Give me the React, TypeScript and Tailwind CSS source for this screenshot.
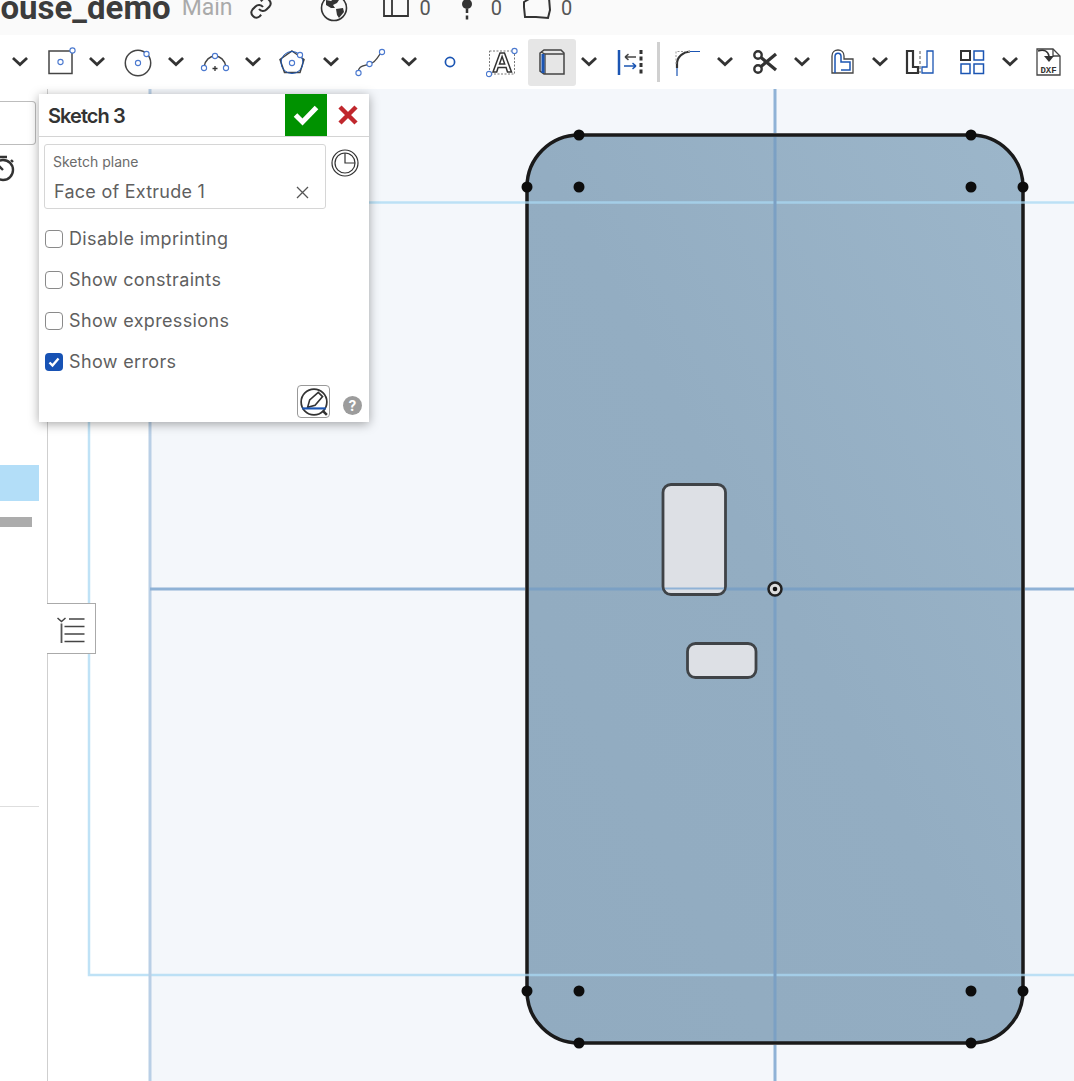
import React from "react";

const Chevron = () => (
  <svg width="16" height="10" viewBox="0 0 16 10" fill="none" stroke="#333" strokeWidth="2.800" strokeLinecap="square">
    <path d="M2 2 8 7.500 14 2" />
  </svg>
);

const BLUE = "#1b55b3";
const Handle = ({ cx, cy, r = 2.6 }: { cx: number; cy: number; r?: number }) => (
  <circle cx={cx} cy={cy} r={r} fill="#fff" stroke="#4b79cf" strokeWidth="1.1" />
);

const Ic = ({ children }: { children: React.ReactNode }) => (
  <svg width="32" height="32" viewBox="0 0 32 32" fill="none">{children}</svg>
);

const RectIcon = () => (
  <Ic>
    <rect x="4" y="5" width="23" height="22.5" stroke="#444" strokeWidth="1.5" />
    <Handle cx={15.5} cy={16} />
    <Handle cx={27.5} cy={4.5} />
  </Ic>
);
const CircleIcon = () => (
  <Ic>
    <circle cx="16" cy="17" r="12.7" stroke="#444" strokeWidth="1.5" />
    <Handle cx={16} cy={17} />
    <Handle cx={24.5} cy={8} />
  </Ic>
);
const ArcIcon = () => (
  <Ic>
    <path d="M5 21C6 14 11 10 16 10s10 4 11 11" stroke="#444" strokeWidth="1.4" />
    <path d="M16 20v5M13.5 22.5h5" stroke="#333" strokeWidth="1.3" />
    <Handle cx={16} cy={10} />
    <Handle cx={5} cy={22} />
    <Handle cx={27} cy={22} />
  </Ic>
);
const PentagonIcon = () => (
  <Ic>
    <path d="M16 5 28 13.5 24 26.5H8.5L4 13.5Z" stroke="#444" strokeWidth="1.5" />
    <circle cx="16" cy="16.5" r="11" stroke={BLUE} strokeWidth="1" />
    <Handle cx={16} cy={17} />
    <Handle cx={24} cy={9} />
  </Ic>
);
const SplineIcon = () => (
  <Ic>
    <path d="M4 27C4 20 9 20 14 18.5S21 16 26 8" stroke="#444" strokeWidth="1.4" />
    <Handle cx={4.5} cy={27} />
    <Handle cx={15.5} cy={18} />
    <Handle cx={28} cy={6} />
  </Ic>
);
const PointIcon = () => (
  <Ic><circle cx="16" cy="16" r="4.6" stroke={BLUE} strokeWidth="1.7" /></Ic>
);
const TextIcon = () => (
  <Ic>
    <rect x="3.5" y="5" width="25" height="23" stroke="#777" strokeWidth="1" strokeDasharray="2 1.5" />
    <path d="M7 26 14 7h4.500l7 19h-4l-1.400-4.500h-8L10.700 26ZM13.500 18h5.200l-2.600-7.500Z" stroke="#333" strokeWidth="1.500" fill="#fff" />
    <Handle cx={28.5} cy={5} />
    <Handle cx={3} cy={28} />
  </Ic>
);
const ConstructionIcon = () => (
  <Ic>
    <path d="M4 7 8 4H25L28 7V28H8L4 25Z" stroke="#444" strokeWidth="1.500" />
    <path d="M5 6 9 8H28M9 8V28" stroke="#444" strokeWidth="1.300" />
    <path d="M7 8V27" stroke={BLUE} strokeWidth="3" />
  </Ic>
);
const DimensionIcon = () => (
  <Ic>
    <path d="M5 4v25" stroke={BLUE} strokeWidth="2.500" />
    <path d="M11 11h11M11 11l3.500-2.800M11 11l3.500 2.800" stroke="#444" strokeWidth="1.500" />
    <path d="M10 20h12M22 20l-3.500-2.800M22 20l-3.500 2.800" stroke={BLUE} strokeWidth="1.500" />
    <path d="M27 4v25" stroke="#333" strokeWidth="3" strokeDasharray="4 2.500" />
  </Ic>
);
const FilletIcon = () => (
  <Ic>
    <path d="M5 22V18C5 11 11 6 18 5.500" stroke="#333" strokeWidth="2.200" />
    <path d="M5 22v8M18 5.500h10" stroke={BLUE} strokeWidth="1.200" />
    <path d="M4 18V5.500h14" stroke="#999" strokeWidth="1" strokeDasharray="2 1.500" />
  </Ic>
);
const ScissorsIcon = () => (
  <Ic>
    <circle cx="9" cy="9" r="3.700" stroke="#333" strokeWidth="2.400" />
    <circle cx="9" cy="23" r="3.700" stroke="#333" strokeWidth="2.400" />
    <path d="M12 11.500 27 24M12 20.500 27 8" stroke="#333" strokeWidth="3.200" />
  </Ic>
);
const UseIcon = () => (
  <Ic>
    <path d="M6 27V10c0-8 12-8 12 0v3h9v14Z" stroke="#444" strokeWidth="1.300" />
    <path d="M9 27V10.500c0-4.500 6-4.500 6 0V16h9v8h-9" stroke={BLUE} strokeWidth="1.500" />
  </Ic>
);
const MirrorIcon = () => (
  <Ic>
    <path d="M3 5h6v16h5v6H3Z" stroke="#333" strokeWidth="2.200" />
    <path d="M29 5h-6v16h-5v6h11Z" stroke={BLUE} strokeWidth="1.300" />
    <path d="M16 5v22" stroke="#555" strokeWidth="1" strokeDasharray="3 2" />
  </Ic>
);
const PatternIcon = () => (
  <Ic>
    <rect x="5" y="5" width="9" height="9" stroke="#333" strokeWidth="2" />
    <rect x="18" y="5" width="9.500" height="9" stroke={BLUE} strokeWidth="1.500" />
    <rect x="5" y="18" width="9" height="9.500" stroke={BLUE} strokeWidth="1.500" />
    <rect x="18" y="18" width="9.500" height="9.500" stroke={BLUE} strokeWidth="1.500" />
  </Ic>
);
const DxfIcon = () => (
  <svg width="32" height="32" viewBox="0 0 32 32" fill="none">
    <path d="M5 29V3h16l7 7v19Z" stroke="#444" strokeWidth="1.300" fill="#fff" />
    <path d="M21 3v7h7" stroke="#444" strokeWidth="1.300" />
    <path d="M6 5c6-2 10 0 11 5" stroke="#333" strokeWidth="1.600" />
    <path d="M12 10h10l-5 6Z" fill="#333" />
    <text x="16.500" y="27" textAnchor="middle" fontFamily="Liberation Mono, monospace" fontSize="9" fontWeight="700" fill="#333">DXF</text>
  </svg>
);

const tools: { w: number; node: React.ReactNode; active?: boolean }[] = [
  { w: 40, node: <Chevron /> },
  { w: 42, node: <RectIcon /> },
  { w: 30, node: <Chevron /> },
  { w: 51, node: <CircleIcon /> },
  { w: 25, node: <Chevron /> },
  { w: 53, node: <ArcIcon /> },
  { w: 24, node: <Chevron /> },
  { w: 54, node: <PentagonIcon /> },
  { w: 24, node: <Chevron /> },
  { w: 54, node: <SplineIcon /> },
  { w: 24, node: <Chevron /> },
  { w: 58, node: <PointIcon /> },
  { w: 45, node: <TextIcon /> },
  { w: 4, node: null },
  { w: 48, node: <ConstructionIcon />, active: true },
  { w: 26, node: <Chevron /> },
  { w: 55, node: <DimensionIcon /> },
];
const tools2: { w: number; node: React.ReactNode }[] = [
  { w: 36, node: <FilletIcon /> },
  { w: 38, node: <Chevron /> },
  { w: 42, node: <ScissorsIcon /> },
  { w: 32, node: <Chevron /> },
  { w: 48, node: <UseIcon /> },
  { w: 28, node: <Chevron /> },
  { w: 52, node: <MirrorIcon /> },
  { w: 52, node: <PatternIcon /> },
  { w: 24, node: <Chevron /> },
  { w: 52, node: <DxfIcon /> },
];

const Check = ({ label, checked }: { label: string; checked?: boolean }) => (
  <div className="flex h-[41px] items-center gap-[6px] pl-[6px]">
    {checked ? (
      <span className="flex h-[18px] w-[18px] items-center justify-center rounded-[4px] bg-[#1752b4]">
        <svg width="12" height="12" viewBox="0 0 12 12" fill="none" stroke="#fff" strokeWidth="2.400">
          <path d="M1.500 6.500 4.500 9.500 10.500 2.500" />
        </svg>
      </span>
    ) : (
      <span className="h-[18px] w-[18px] rounded-[4px] border border-[#8a8a8a] bg-white" />
    )}
    <span className="text-[18px] leading-[22px] tracking-[0.35px] text-[#5f5f5f]">{label}</span>
  </div>
);

const pts = [
  [579, 135], [971, 135], [527, 187], [1023, 187], [579, 187], [971, 187],
  [527, 991], [1023, 991], [579, 991], [971, 991], [579, 1043], [971, 1043],
];

export default function App() {
  return (
    <div className="relative flex h-[1081px] w-[1074px] flex-col overflow-hidden bg-white font-['Inter','Liberation_Sans',sans-serif]">
      {/* title bar */}
      <div className="flex h-[35px] shrink-0 items-center overflow-hidden bg-[#fafafa]">
        <div className="-ml-[18px] -mt-[20px] flex items-center text-[#3c3c3c]">
          <span className="font-['Roboto',sans-serif] text-[33px] font-bold leading-[36px]">house_demo</span>
          <span className="ml-[11px] font-['Roboto',sans-serif] text-[23px] leading-[36px] text-[#aaa]">Main</span>
          <svg className="ml-[16px]" width="24" height="24" viewBox="0 0 24 24" fill="none" stroke="#333" strokeWidth="2">
            <path d="M10 13a5 5 0 0 0 7.500.5l3-3a5 5 0 0 0-7-7l-1.700 1.700" />
            <path d="M14 11a5 5 0 0 0-7.500-.5l-3 3a5 5 0 0 0 7 7l1.700-1.700" />
          </svg>
          <svg className="ml-[47px]" width="28" height="28" viewBox="0 0 28 28" fill="none">
            <circle cx="14" cy="14" r="12.500" stroke="#333" strokeWidth="1.600" />
            <path d="M6 6l5 1 5-4 3 3-2 3-4 2 2 3-4 0-5-3ZM16 15l7-1 1 4-5 6-2-3Z" fill="#333" />
          </svg>
          <svg className="-mt-[4px] ml-[34px]" width="28" height="28" viewBox="0 0 28 28" fill="none" stroke="#333" strokeWidth="1.800">
            <path d="M9 6V1h11l6 6v17H10V6H2v18h8M20 1v6h6" />
          </svg>
          <span className="ml-[10px] font-['Roboto',sans-serif] text-[20px] text-[#555]">0</span>
          <svg className="ml-[26px]" width="20" height="28" viewBox="0 0 20 28" fill="none">
            <circle cx="10" cy="10" r="5" fill="#333" />
            <path d="M10 15v11" stroke="#333" strokeWidth="2.500" strokeDasharray="4 2.500" />
          </svg>
          <span className="ml-[14px] font-['Roboto',sans-serif] text-[20px] text-[#555]">0</span>
          <svg className="ml-[20px]" width="30" height="28" viewBox="0 0 30 28" fill="none" stroke="#333" strokeWidth="2">
            <path d="M2 8l10-6 3 3 12-1 1 12-2 8-12-1-11 0-1-10Z" />
          </svg>
          <span className="ml-[9px] font-['Roboto',sans-serif] text-[20px] text-[#555]">0</span>
        </div>
      </div>

      {/* toolbar */}
      <div className="flex h-[54px] shrink-0 items-center bg-white">
        {tools.map((t, i) => (
          <div key={i} style={{ width: t.w }} className={`flex h-[47px] shrink-0 items-center justify-center ${t.active ? "rounded-[3px] bg-[#e6e6e6]" : ""}`}>
            {t.node}
          </div>
        ))}
        <div className="h-[40px] w-[3px] shrink-0 bg-[#d0d0d0]" />
        <div className="w-[10px] shrink-0" />
        {tools2.map((t, i) => (
          <div key={i} style={{ width: t.w }} className="flex h-[47px] shrink-0 items-center justify-center">
            {t.node}
          </div>
        ))}
      </div>

      {/* body */}
      <div className="flex min-h-0 flex-1">
        <aside className="flex w-[48px] shrink-0 flex-col border-r border-[#cfcfcf] bg-white">
          <div className="mt-[12px] h-[44px] w-[36px] rounded-r-[4px] border border-l-0 border-[#bdbdbd]" />
          <div className="mt-[9px] h-[30px] overflow-hidden">
            <svg className="-ml-[10px]" width="28" height="30" viewBox="0 0 28 30" fill="none" stroke="#333" strokeWidth="2.400">
              <circle cx="13" cy="16" r="10" />
              <path d="M13 16 6 9M9 3h8M21 6l2 2" />
            </svg>
          </div>
          <div className="mt-[281px] h-[36px] w-[39px] bg-[#b3def8]" />
          <div className="mt-[16px] h-[10px] w-[32px] bg-[#acacac]" />
          <div className="mt-[279px] h-px w-[39px] bg-[#dedede]" />
        </aside>

        <main className="relative min-w-0 flex-1 bg-white">
          <svg className="absolute inset-0" width="1026" height="992" viewBox="48 89 1026 992" fill="none">
            <defs>
              <linearGradient id="sk" x1="1" y1="0" x2="0" y2="1">
                <stop offset="0" stopColor="#9cb6ca" />
                <stop offset="0.5" stopColor="#93adc2" />
                <stop offset="1" stopColor="#91abc0" />
              </linearGradient>
            </defs>
            <rect x="150" y="89" width="924" height="992" fill="#f4f7fb" />
            <rect x="527" y="135" width="496" height="908" rx="52" fill="url(#sk)" stroke="#1a1a1a" strokeWidth="3.500" />
            <path d="M1074 202.500H89V975H1074" stroke="#a9d8f3" strokeWidth="2.500" opacity="0.75" />
            <path d="M150 89V1081" stroke="#b9cfe6" strokeWidth="3" />
            <path d="M775 89V133" stroke="#8fb2d6" strokeWidth="3" />
            <path d="M775 137V1041" stroke="#7ba0c4" strokeWidth="3" />
            <path d="M775 1045V1081" stroke="#8fb2d6" strokeWidth="3" />
            <path d="M150 589H525M1025 589H1074" stroke="#8fb2d6" strokeWidth="3" />
            <path d="M529 589H1021" stroke="#7ba0c4" strokeWidth="3" />
            <rect x="663" y="484.500" width="62.500" height="110" rx="8" fill="#dde0e5" stroke="#3f4347" strokeWidth="2.800" />
            <path d="M665 588.500H724" stroke="#8fb2d6" strokeWidth="2" />
            <rect x="687.500" y="643.500" width="68.500" height="34" rx="8" fill="#dde0e5" stroke="#3f4347" strokeWidth="2.800" />
            {pts.map(([x, y], i) => (
              <circle key={i} cx={x} cy={y} r="5.500" fill="#0d0d0d" />
            ))}
            <circle cx="775" cy="589" r="6.500" fill="#dcdcdc" stroke="#222" strokeWidth="2.500" />
            <circle cx="775" cy="589" r="2.300" fill="#111" />
          </svg>
        </main>
      </div>

      {/* panel toggle */}
      <button className="absolute left-[47px] top-[603px] flex h-[51px] w-[49px] items-center justify-center border border-l-0 border-[#aaa] bg-white">
        <svg width="30" height="32" viewBox="0 0 30 32" fill="none">
          <path d="M1.500 5 5.500 8.500 9.500 5" stroke="#444" strokeWidth="1.500" />
          <path d="M5.500 10.500V30" stroke="#555" strokeWidth="1.800" />
          <path d="M13 6h15.500M8.500 13.500h20M8.500 21h20M8.500 28.500h20" stroke="#444" strokeWidth="1.300" />
        </svg>
      </button>

      {/* dialog */}
      <div className="absolute left-[39px] top-[94px] flex h-[328px] w-[330px] flex-col bg-white shadow-[0_2px_10px_rgba(0,0,0,0.35)]">
        <div className="flex h-[43px] shrink-0 items-center border-b border-[#d4d4d4]">
          <span className="ml-[9px] mt-[1px] flex-1 text-[20px] font-semibold leading-[24px] tracking-[-0.95px] text-[#333]">Sketch 3</span>
          <span className="flex h-[42px] w-[42px] items-center justify-center bg-[#009200]">
            <svg width="26" height="22" viewBox="0 0 26 22" fill="none" stroke="#fff" strokeWidth="5">
              <path d="M2.500 11 9.500 18 23.500 3.500" />
            </svg>
          </span>
          <span className="flex h-[42px] w-[42px] items-center justify-center">
            <svg width="20" height="20" viewBox="0 0 20 20" fill="none" stroke="#c0272d" strokeWidth="4.500">
              <path d="M2 2 18 18M18 2 2 18" />
            </svg>
          </span>
        </div>
        <div className="relative ml-[5px] mt-[7px] h-[65px] w-[282px] shrink-0 rounded-[3px] border border-[#d6d6d6] px-[9px] pt-[8px]">
          <div className="-ml-px text-[14px] leading-[18px] text-[#6b6b6b]">Sketch plane</div>
          <div className="mt-[10px] text-[18px] leading-[22px] tracking-[0.25px] text-[#5f5f5f]">Face of Extrude 1</div>
          <svg className="absolute right-[16px] top-[41px]" width="13" height="13" viewBox="0 0 13 13" fill="none" stroke="#555" strokeWidth="1.300">
            <path d="M1 1 12 12M12 1 1 12" />
          </svg>
          <svg className="absolute -right-[34px] top-[4px]" width="28" height="28" viewBox="0 0 28 28" fill="none" stroke="#333">
            <circle cx="14" cy="14" r="13" strokeWidth="1.200" />
            <circle cx="14" cy="14" r="10" strokeWidth="1.200" />
            <path d="M14 4V14H24" strokeWidth="1.200" />
          </svg>
        </div>
        <div className="mt-[9px]">
          <Check label="Disable imprinting" />
          <Check label="Show constraints" />
          <Check label="Show expressions" />
          <Check label="Show errors" checked />
        </div>
        <div className="flex flex-1 items-start justify-end gap-[13px] pr-[7px] pt-[3px]">
          <span className="flex h-[33px] w-[33px] items-center justify-center rounded-[4px] border border-[#999]">
            <svg width="30" height="30" viewBox="0 0 28 28" fill="none">
              <circle cx="14" cy="14" r="12" stroke="#333" strokeWidth="1.600" />
              <path d="M8 19 10 12 18 5 22 9 15 17Z" stroke="#333" strokeWidth="1.500" fill="#fff" />
              <path d="M3 20H25" stroke={BLUE} strokeWidth="2" />
              <path d="M22 22l4 4" stroke="#333" strokeWidth="2.400" />
            </svg>
          </span>
          <span className="mt-[11px] flex h-[19px] w-[19px] items-center justify-center rounded-full bg-[#9c9c9c] text-[14px] font-bold leading-none text-white">?</span>
        </div>
      </div>
    </div>
  );
}
